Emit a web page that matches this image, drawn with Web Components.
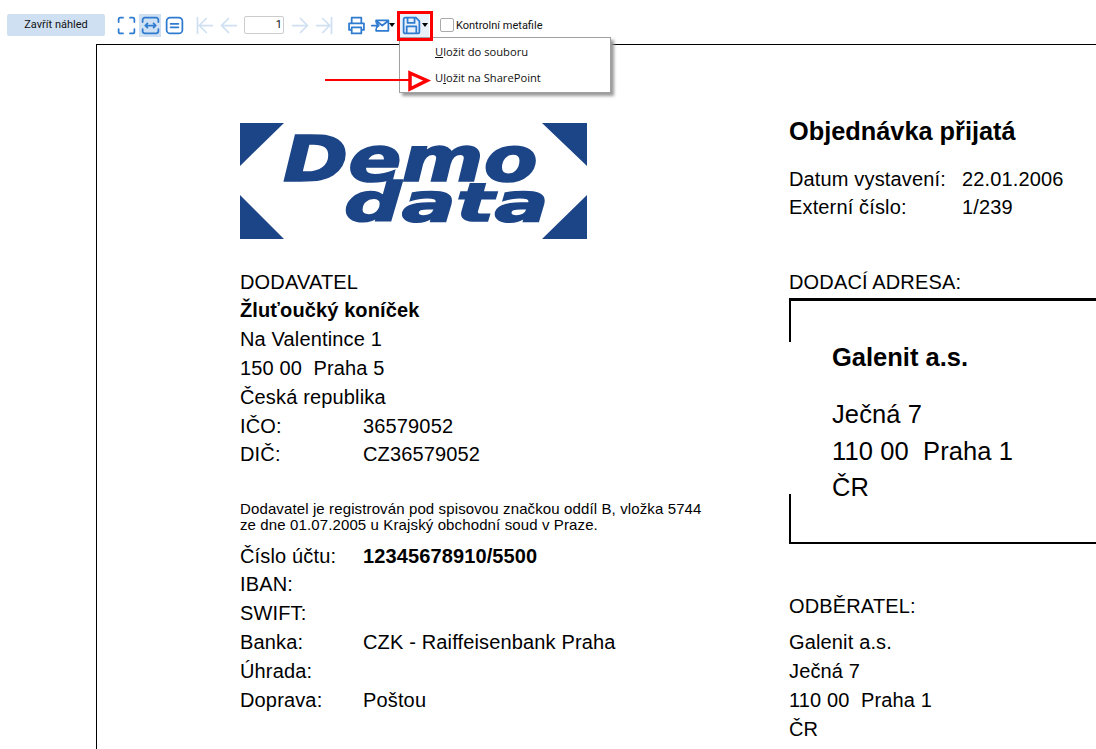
<!DOCTYPE html>
<html lang="cs">
<head>
<meta charset="utf-8">
<title>Náhled</title>
<style>
  html, body { margin: 0; padding: 0; height: 100%; background: #fff; overflow: hidden; }
  body { font-family: "Liberation Sans", Arial, sans-serif; color: #000; }
</style>
</head>
<body>
<preview-app>
  <preview-toolbar slot="toolbar"></preview-toolbar>
  <doc-sheet slot="sheet"></doc-sheet>
</preview-app>

<script>
const define = (name, html) => {
  customElements.define(name, class extends HTMLElement {
    constructor () {
      super();
      this.attachShadow({ mode: 'open' }).innerHTML = html;
    }
  });
};

const BLUE = '#2f7bd0';
const PALE = '#cfe0f3';

const icons = {
  full: `<path d="M3 8V5a2 2 0 0 1 2-2h3M16 3h3a2 2 0 0 1 2 2v3M21 16v3a2 2 0 0 1-2 2h-3M8 21H5a2 2 0 0 1-2-2v-3"/>`,
  width: `<path d="M3 8V5.500A2.500 2.500 0 0 1 5.500 3h13A2.500 2.500 0 0 1 21 5.500V8M3 16v2.500A2.500 2.500 0 0 0 5.500 21h13a2.500 2.500 0 0 0 2.500-2.500V16M6 12h12M8.500 9.500 6 12l2.500 2.500M15.500 9.500 18 12l-2.500 2.500"/>`,
  page: `<rect x="3" y="3" width="18" height="18" rx="4"/><path d="M7.500 10h9M7.500 14h9"/>`,
  first: `<path d="M4 3v18M21 12H7M14 4l-8 8 8 8"/>`,
  prev: `<path d="M21 12H5M12 4l-8 8 8 8"/>`,
  next: `<path d="M3 12h16M12 4l8 8-8 8"/>`,
  last: `<path d="M20 3v18M3 12h14M10 4l8 8-8 8"/>`,
  print: `<path d="M6.500 9V3h11v6M6.500 17H3.500V9.500h17V17h-3M6.500 14h11v7h-11z"/>`,
  mail: `<path d="M7 8V6h14v12H7v-2M7 6.500l7 5.500 7-5.500M2 12h8M7.500 9.500 10 12l-2.500 2.500"/>`,
  save: `<path d="M3 5a2 2 0 0 1 2-2h12l4 4v12a2 2 0 0 1-2 2H5a2 2 0 0 1-2-2zM7.500 3v6h8V3M6.500 21v-8h11v8"/>`
};

customElements.define('tool-icon', class extends HTMLElement {
  constructor () {
    super();
    this.attachShadow({ mode: 'open' }).innerHTML = `
      <style>
        :host { display: flex; width: 24px; height: 24px; align-items: flex-end; justify-content: center; }
        .box { width: 22px; height: 23px; display: flex; align-items: center; justify-content: center; }
        :host([active]) .box { background: ${PALE}; }
        svg { width: 21px; height: 21px; fill: none; stroke: ${this.hasAttribute('off') ? PALE : BLUE}; stroke-width: 2; stroke-linecap: round; stroke-linejoin: round; }
      </style>
      <div class="box"><svg viewBox="0 0 24 24">${icons[this.getAttribute('name')]}</svg></div>`;
  }
});

define('drop-caret', `
  <style>
    :host { display: block; width: 0; height: 0; border: 3.500px solid transparent; border-top: 4px solid #000; border-bottom: 0; }
  </style>`);

define('preview-toolbar', `
  <style>
    :host { display: flex; align-items: center; height: 44px; padding: 6px 0 0 7px; box-sizing: border-box; font: 11px Roboto, sans-serif; color: #111; }
    .close { width: 98px; height: 22px; line-height: 22px; background: ${PALE}; border-radius: 2px; text-align: center; margin-right: 9px; }
    .sep { width: 6px; }
    .sep2 { width: 8px; }
    .page { width: 37px; height: 16px; line-height: 16px; border: 1px solid #ccc; border-radius: 2px; margin: 0 4px; text-align: right; padding-right: 1px; }
    .split { display: flex; align-items: center; }
    .split drop-caret { margin-left: -3px; }
    .mail { margin-right: 4px; }
    .save { background: #e9f1fa; height: 24px; margin-right: 11px; padding-right: 1px; }
    .save drop-caret { margin-left: -1px; }
    .check { width: 12px; height: 12px; border: 1px solid #aaa; border-radius: 2px; margin-right: 2px; flex: none; }
  </style>
  <div class="close">Zavřít náhled</div>
  <tool-icon name="full"></tool-icon>
  <tool-icon name="width" active></tool-icon>
  <tool-icon name="page"></tool-icon>
  <div class="sep"></div>
  <tool-icon name="first" off></tool-icon>
  <tool-icon name="prev" off></tool-icon>
  <div class="page">1</div>
  <tool-icon name="next" off></tool-icon>
  <tool-icon name="last" off></tool-icon>
  <div class="sep2"></div>
  <tool-icon name="print"></tool-icon>
  <div class="split mail"><tool-icon name="mail"></tool-icon><drop-caret></drop-caret></div>
  <div class="split save"><tool-icon name="save"></tool-icon><drop-caret></drop-caret></div>
  <div class="check"></div>
  <div>Kontrolní metafile</div>`);

define('save-menu', `
  <style>
    :host { position: absolute; left: 399px; top: 37px; width: 212px; height: 56px; box-sizing: border-box; background: #fff; border: 1px solid #a0a0a0; box-shadow: 3px 3px 3px #999; font: 11.200px "Open Sans", sans-serif; color: #111; padding: 1px 0 0 35px; }
    div { height: 25.500px; line-height: 25px; }
    u { text-underline-offset: 1px; }
  </style>
  <div><u>U</u>ložit do souboru</div>
  <div>U<u>l</u>ožit na SharePoint</div>`);

define('red-marks', `
  <style>
    :host { position: absolute; left: 0; top: 0; width: 1096px; height: 100px; pointer-events: none; }
    svg { display: block; }
  </style>
  <svg width="1096" height="100" fill="none" stroke="#f00">
    <rect x="398.500" y="12.500" width="33" height="27" stroke-width="3"/>
    <path d="M325 80h85" stroke-width="2"/>
    <path d="M410 73 427 80.500 410 89z" stroke-width="3.500"/>
  </svg>`);

define('doc-logo', `
  <style>
    :host { display: block; width: 347px; height: 116px; }
    svg { display: block; }
    text { font-family: "DejaVu Sans", sans-serif; font-weight: 700; font-style: italic; fill: #1c4587; stroke: #1c4587; }
  </style>
  <svg width="347" height="116" viewBox="0 0 347 116">
    <g fill="#1c4587">
      <path d="M0 0h44L0 43zM302 0h45v43zM0 72l44 44H0zM347 72v44h-45z"/>
    </g>
    <text x="43" y="58" font-size="62" textLength="255" lengthAdjust="spacingAndGlyphs" stroke-width="1.600">Demo</text>
    <text x="104" y="98" font-size="54" textLength="205" lengthAdjust="spacingAndGlyphs" stroke-width="1.600">data</text>
  </svg>`);

define('info-row', `
  <style>
    :host { display: flex; height: 28.800px; line-height: 28.800px; }
    .label { width: var(--label-width, 123px); flex: none; }
    :host([strong]) .value { font-weight: 700; letter-spacing: .12px; }
  </style>
  <div class="label"><slot name="label"></slot></div>
  <div class="value"><slot></slot></div>`);

define('supplier-col', `
  <style>
    :host { display: block; width: 549px; flex: none; padding-top: 78px; font-size: 20px; letter-spacing: .15px; }
    doc-logo { margin-bottom: 28.600px; }
    b { display: block; letter-spacing: .12px; }
    .line { height: 28.800px; line-height: 28.800px; }
    .note { font-size: 15px; line-height: 16px; letter-spacing: .12px; margin: 32px 0 8.400px; }
  </style>
  <doc-logo></doc-logo>
  <div class="line">DODAVATEL</div>
  <div class="line"><b>Žluťoučký koníček</b></div>
  <div class="line">Na Valentince 1</div>
  <div class="line">150 00&nbsp; Praha 5</div>
  <div class="line">Česká republika</div>
  <info-row><span slot="label">IČO:</span>36579052</info-row>
  <info-row><span slot="label">DIČ:</span>CZ36579052</info-row>
  <div class="note">Dodavatel je registrován pod spisovou značkou oddíl B, vložka 5744<br>ze dne 01.07.2005 u Krajský obchodní soud v Praze.</div>
  <info-row strong><span slot="label" style="font-weight:400">Číslo účtu:</span>12345678910/5500</info-row>
  <info-row><span slot="label">IBAN:</span></info-row>
  <info-row><span slot="label">SWIFT:</span></info-row>
  <info-row><span slot="label">Banka:</span>CZK - Raiffeisenbank Praha</info-row>
  <info-row><span slot="label">Úhrada:</span></info-row>
  <info-row><span slot="label">Doprava:</span>Poštou</info-row>`);

define('address-box', `
  <style>
    :host { display: flex; height: 246px; box-sizing: border-box; border-top: 3px solid #000; border-bottom: 2px solid #000; }
    .edge { width: 2px; display: flex; flex-direction: column; justify-content: space-between; flex: none; }
    .edge i { display: block; width: 2px; background: #000; }
    .edge i:first-child { height: 41px; }
    .edge i:last-child { height: 48px; }
    .body { padding: 38px 0 0 41px; font-size: 25.500px; line-height: 36px; letter-spacing: .1px; }
    .name { font-size: 25.500px; font-weight: 700; line-height: 36px; margin-bottom: 21px; letter-spacing: 0; }
    .first { margin-bottom: 1px; }
  </style>
  <div class="edge"><i></i><i></i></div>
  <div class="body">
    <div class="name">Galenit a.s.</div>
    <div class="first">Ječná 7</div>
    <div>110 00&nbsp; Praha 1</div>
    <div>ČR</div>
  </div>`);

define('order-col', `
  <style>
    :host { display: block; flex: 1; min-width: 0; padding-top: 68px; font-size: 20px; letter-spacing: .15px; --label-width: 173px; }
    h1 { margin: 0 0 16px; font-size: 25.330px; line-height: 36px; letter-spacing: 0; }
    info-row { height: 28px; line-height: 28px; }
    .head { margin: 47px 0 1px; height: 28.800px; line-height: 28.800px; }
    .line { height: 29px; line-height: 29px; }
    .sec { height: 28.800px; line-height: 28.800px; margin: 48px 0 7px; }
  </style>
  <h1>Objednávka přijatá</h1>
  <info-row><span slot="label">Datum vystavení:</span>22.01.2006</info-row>
  <info-row><span slot="label">Externí číslo:</span>1/239</info-row>
  <div class="head">DODACÍ ADRESA:</div>
  <address-box></address-box>
  <div class="sec">ODBĚRATEL:</div>
  <div class="line">Galenit a.s.</div>
  <div class="line">Ječná 7</div>
  <div class="line">110 00&nbsp; Praha 1</div>
  <div class="line">ČR</div>`);

define('doc-sheet', `
  <style>
    :host { display: flex; flex: 1; min-height: 0; margin-left: 96px; border-left: 1px solid #000; border-top: 1px solid #000; padding-left: 143px; overflow: hidden; }
  </style>
  <supplier-col></supplier-col>
  <order-col></order-col>`);

define('preview-app', `
  <style>
    :host { display: flex; flex-direction: column; position: relative; width: 1096px; height: 749px; overflow: hidden; }
  </style>
  <slot name="toolbar"></slot>
  <slot name="sheet"></slot>
  <save-menu></save-menu>
  <red-marks></red-marks>`);
</script>
</body>
</html>
